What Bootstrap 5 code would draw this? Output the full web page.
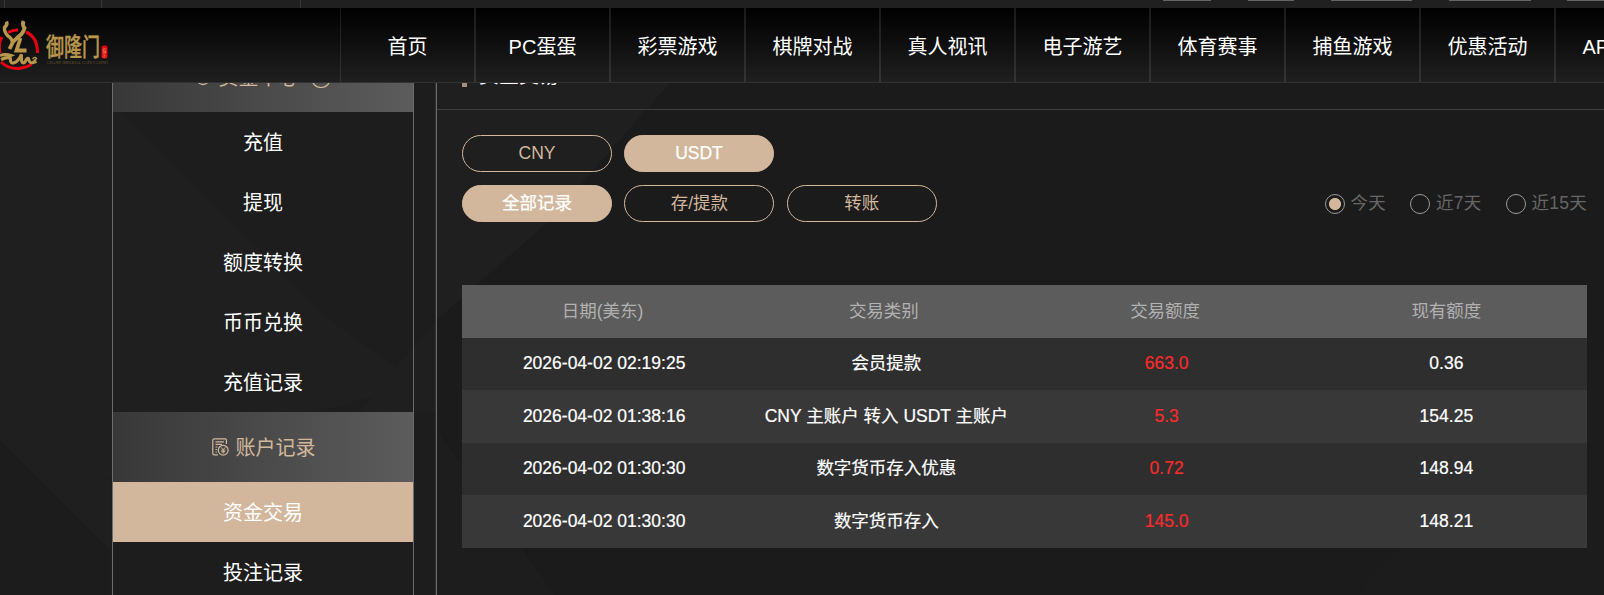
<!DOCTYPE html>
<html lang="zh-CN">
<head>
<meta charset="utf-8">
<title>资金交易</title>
<link href="https://cdn.jsdelivr.net/npm/bootstrap@5.3.0/dist/css/bootstrap.min.css" rel="stylesheet">
<style>
:root{--sand:#d2b79c}
body{background:#1d1d1d;color:#fff;font-family:"Liberation Sans","Noto Sans CJK SC",sans-serif;font-size:17.5px;height:595px;overflow:hidden}
.backdrop{left:0;top:0;width:1604px;height:595px;z-index:-1}
.strip{height:8px;background:#202020;overflow:hidden}
.strip .cell{border-right:1px solid #383838;height:8px}
.strip .pill{height:1px;background:#656565}
.topnav{height:75px;background:linear-gradient(#000,#1f1f1f);border-bottom:1px solid #323232;z-index:5;overflow:hidden}
.brand{width:340px}
.topnav .tab{width:135px;height:75px;line-height:78px;font-size:20px;text-align:center;color:#fff;text-decoration:none;border:solid;border-width:0 1px;border-image:linear-gradient(#191919,#353535) 1}
.page{margin-top:-41px;height:553px}
.side{width:302px;margin-left:112px;border:solid #6c6c6c;border-width:0 1px;font-size:20px}
.side .head{height:70px;background:linear-gradient(90deg,#383838,#5c5c5c);color:var(--sand)}
.side .head span{position:relative;top:1px}
.side .item{display:block;height:60px;line-height:62px;text-align:center;color:#fff;text-decoration:none}
.side .item.on{background:var(--sand)}
.panel{margin-left:22px;border-left:1px solid #6c6c6c;box-shadow:-1px 0 #303030;width:1168px}
.panel .title{height:68px;border-bottom:1px solid #3e3e3e;padding-left:25px;font-size:20px}
.panel .title i{width:5px;height:23px;background:#a58f7e;margin-right:12px}
.panel .inside{padding:25px 17px 0 25px}
.pillbtn{width:150px;height:37px;line-height:35px;padding:0;border:1px solid var(--sand);border-radius:19px;color:var(--sand);background:none;font-size:17.5px}
.pillbtn.on{background:var(--sand);color:#fff;-webkit-text-stroke:.25px}
.range{color:#666;line-height:19px}
.range input{appearance:none;width:20px;height:20px;margin:0 6px 0 0;border:1px solid #999;border-radius:50%;flex:none}
.range input:checked{background:radial-gradient(circle,var(--sand) 5.6px,transparent 6.4px)}
.range label{letter-spacing:.25px}
.log{width:1125px;margin-top:63px;table-layout:fixed;border-collapse:collapse;text-align:center}
.log th,.log td{padding:0 0 3px;line-height:20px;height:52px;vertical-align:middle}
.log th{background:#5c5c5c;color:#b1b1b1;font-weight:400;height:53px;padding-bottom:2px}
.log td{background:#2e2e2e;-webkit-text-stroke:.2px}
.log tr:nth-child(even) td{background:#383838;padding-bottom:2px;height:53px}
.log td:nth-child(-n+3){padding-left:3px}
.log td:nth-child(2){padding-left:5px}
.log td:nth-child(3){color:#f92a2a}
</style>
</head>
<body>
<svg class="backdrop position-absolute" viewBox="0 0 1604 595">
  <path d="M0 0H110V595H0Z" fill="#1f1f1f"/>
  <path d="M120 110L330 320 420 385 360 400 100 480V110Z" fill="#1f1f1f"/>
  <path d="M437 320L390 375 360 412H437Z" fill="#1f1f1f"/>
  <path d="M0 440L110 550V595H0Z" fill="#1c1c1c"/>
  <path d="M437 83H1604V595H555L437 430V320L545 225 670 83Z" fill="#1b1b1b"/>
  <path d="M437 83H670L545 225 437 320Z" fill="#1f1f1f"/>
  <path d="M1400 548Q1370 570 1360 595H1604V350Z" fill="#1c1c1c"/>
</svg>

<div class="strip d-flex">
  <div class="cell" style="width:5px"></div>
  <div class="cell" style="width:97px"></div>
  <div class="cell" style="width:199px"></div>
  <div class="d-flex ms-auto" style="width:441px">
    <div class="pill" style="width:48px"></div>
    <div class="pill" style="width:46px;margin-left:37px"></div>
    <div class="pill" style="width:81px;margin-left:37px"></div>
    <div class="pill" style="width:82px;margin-left:37px"></div>
    <div class="pill flex-grow-1" style="margin-left:36px"></div>
  </div>
</div>

<header class="topnav d-flex position-relative">
  <a class="brand flex-shrink-0" href="#">
    <svg class="d-block" width="120" height="74" viewBox="0 8 120 74">
      <g fill="none" stroke="#e60012" stroke-width="3">
        <path d="M8 32.500Q13 30 18 30"/>
        <path d="M26 32Q37.500 37 37.500 53"/>
        <path d="M2 37Q-2 43 0 53"/>
        <path d="M1 62Q8 68.800 18 68.500Q26 68 31.500 64"/>
      </g>
      <g fill="none" stroke="#b8964c">
        <path d="M6.500 21.500Q8 25 4.500 27.500Q4 32 8 36Q12 38 12.500 43" stroke-width="3.400"/>
        <path d="M23.500 21Q22 25 24.500 28Q23 34 18 37L13 42 9.500 49" stroke-width="3.800"/>
        <path d="M20.500 38L16.500 50.500H26.500" stroke-width="3.800"/>
        <path d="M0 55.500Q5 53.500 11 55.500L1 59.500Q8 56.500 10.500 58.500Q10 63.500 13.500 63Q18 62 21.500 54.500V60Q22 64.500 25 62Q27.500 57 28.500 58.500Q29.500 64 33 62.500L36.500 61.500" stroke-width="3"/>
        <path d="M32.500 59Q35 56 36.500 58.500L33.500 61" stroke-width="1.400"/>
      </g>
      <text transform="translate(46 56) scale(1 1.380)" font-family="Noto Sans CJK SC" font-size="18" font-weight="500" textLength="54" fill="#b8964c" stroke="#b8964c" stroke-width=".3">御隆门</text>
      <text x="47" y="64.300" font-family="Liberation Serif" font-size="4" textLength="61" fill="#675633">GRAND IMPERIAL GATE CASINO</text>
      <rect x="101.500" y="45.500" width="6" height="13" rx="2" fill="#e60012"/>
      <text x="102.200" y="51.500" font-family="Noto Sans CJK SC" font-size="4.500" fill="#d9a05a">娱<tspan x="102.200" dy="5">乐</tspan></text>
    </svg>
  </a>
  <nav class="d-flex flex-shrink-0">
    <a class="tab" href="#">首页</a>
    <a class="tab" href="#">PC蛋蛋</a>
    <a class="tab" href="#">彩票游戏</a>
    <a class="tab" href="#">棋牌对战</a>
    <a class="tab" href="#">真人视讯</a>
    <a class="tab" href="#">电子游艺</a>
    <a class="tab" href="#">体育赛事</a>
    <a class="tab" href="#">捕鱼游戏</a>
    <a class="tab" href="#">优惠活动</a>
    <a class="tab" href="#">APP下载</a>
  </nav>
</header>

<div class="page d-flex">
  <aside class="side flex-shrink-0">
    <div class="head d-flex align-items-center justify-content-center">
      <svg width="16" height="18" viewBox="0 0 16 18" fill="none" stroke="currentColor" stroke-width="1.300" class="me-2"><circle cx="8" cy="10" r="6.500"/><path d="M5 6l3 3 3-3M8 9v5M5.500 10.500h5"/></svg>
      <span>资金中心</span>
      <svg width="22" height="22" viewBox="0 0 22 22" fill="none" stroke="currentColor" stroke-width="1.200" style="margin-left:11px"><circle cx="11" cy="12" r="9.500"/><path d="M7 10l4 4 4-4"/></svg>
    </div>
    <a class="item" href="#">充值</a>
    <a class="item" href="#">提现</a>
    <a class="item" href="#">额度转换</a>
    <a class="item" href="#">币币兑换</a>
    <a class="item" href="#">充值记录</a>
    <div class="head d-flex align-items-center justify-content-center">
      <svg width="17" height="18" viewBox="0 0 17 18" fill="none" stroke="currentColor" stroke-width="1.200" style="margin:0 7px 0 1px">
        <path d="M14.400 6V2.200Q14.400.8 13 .8H2.200Q.8.8.8 2.200V15.400Q.8 16.800 2.200 16.800H6"/>
        <path d="M3.500 3.800H12M3.500 6.300H10M3.500 9H5.500M3.500 11.500H5M3.500 14H5"/>
        <circle cx="11.200" cy="12.200" r="4.900"/>
        <path d="M9.200 9.400l2 2.400 2-2.400M11.200 11.800V15.500M9.200 12.200H13.200M9.200 13.800H13.200" stroke-width="1"/>
      </svg>
      <span>账户记录</span>
    </div>
    <a class="item on" href="#">资金交易</a>
    <a class="item" href="#">投注记录</a>
  </aside>

  <main class="panel flex-shrink-0">
    <div class="title d-flex align-items-center"><i></i><span>资金交易</span></div>
    <div class="inside">
      <div class="d-flex" style="gap:12px">
        <button class="pillbtn">CNY</button>
        <button class="pillbtn on">USDT</button>
      </div>
      <div class="d-flex" style="gap:12.400px;margin-top:13px">
        <button class="pillbtn on">全部记录</button>
        <button class="pillbtn">存/提款</button>
        <button class="pillbtn">转账</button>
        <div class="range d-flex align-items-center ms-auto" style="gap:24px">
          <label class="d-flex"><input type="radio" name="r" checked>今天</label>
          <label class="d-flex"><input type="radio" name="r">近7天</label>
          <label class="d-flex"><input type="radio" name="r">近15天</label>
        </div>
      </div>
      <table class="log">
        <thead><tr><th>日期(美东)</th><th>交易类别</th><th>交易额度</th><th>现有额度</th></tr></thead>
        <tbody>
          <tr><td>2026-04-02 02:19:25</td><td>会员提款</td><td>663.0</td><td>0.36</td></tr>
          <tr><td>2026-04-02 01:38:16</td><td>CNY 主账户 转入 USDT 主账户</td><td>5.3</td><td>154.25</td></tr>
          <tr><td>2026-04-02 01:30:30</td><td>数字货币存入优惠</td><td>0.72</td><td>148.94</td></tr>
          <tr><td>2026-04-02 01:30:30</td><td>数字货币存入</td><td>145.0</td><td>148.21</td></tr>
        </tbody>
      </table>
    </div>
  </main>
</div>
<script src="https://cdn.jsdelivr.net/npm/bootstrap@5.3.0/dist/js/bootstrap.bundle.min.js"></script>
</body>
</html>
